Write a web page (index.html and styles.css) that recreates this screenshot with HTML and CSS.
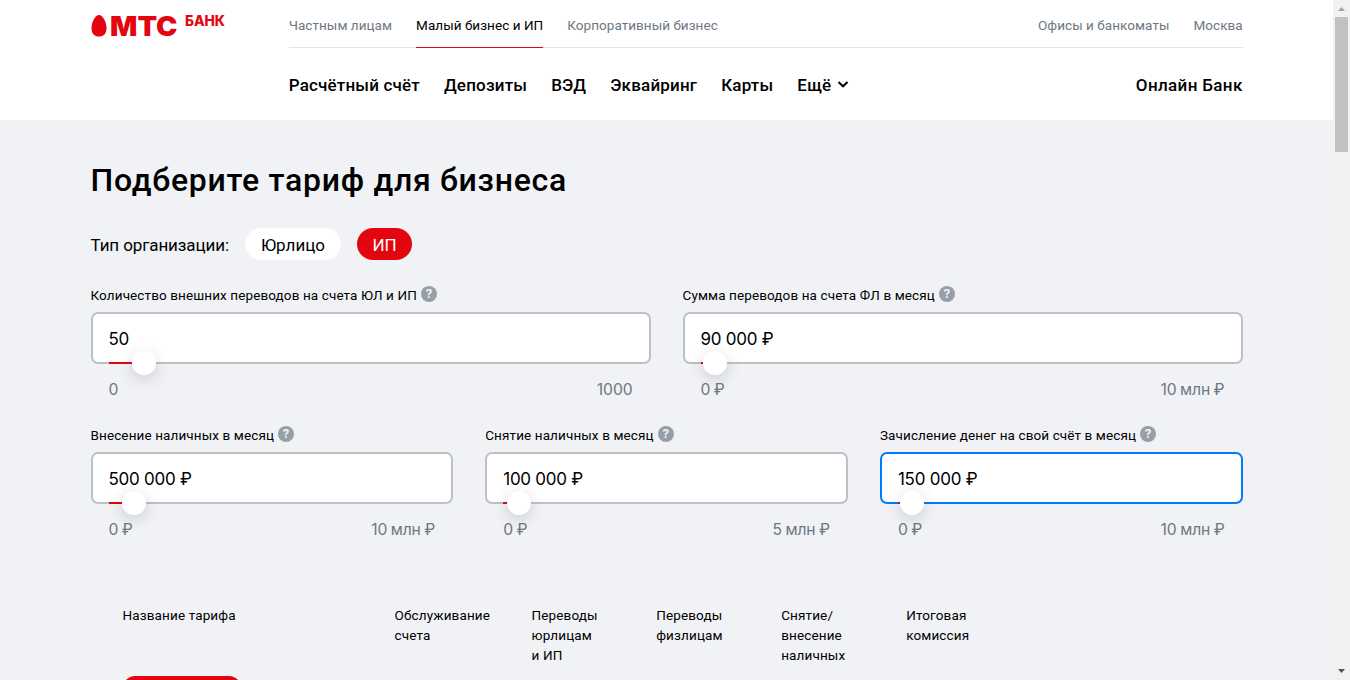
FILE: index.html
```html
<!DOCTYPE html>
<html lang="ru">
<head>
<meta charset="utf-8">
<title>МТС Банк</title>
<link rel="stylesheet" href="styles.css">
</head>
<body>
<div class="window">
<div class="page">
  <header class="header">
    <div class="container header-row">
      <svg class="logo" width="140" height="40" viewBox="0 -10 140 40">
        <path class="red" d="M8 0C12 0 15.500 7.400 15.500 13C15.500 18.600 12.600 21.600 8 21.600S.5 18.600 .5 13C.5 7.400 4 0 8 0Z"/>
        <text class="logo-main" x="19" y="20.500" textLength="67.500" lengthAdjust="spacingAndGlyphs">МТС</text>
        <text class="logo-sub" x="94" y="10.800" textLength="40" lengthAdjust="spacingAndGlyphs">БАНК</text>
      </svg>
      <div class="navs">
        <nav class="top-nav">
          <a>Частным лицам</a><a class="active">Малый бизнес и ИП</a><a>Корпоративный бизнес</a>
          <a class="push">Офисы и банкоматы</a><a>Москва</a>
        </nav>
        <nav class="main-nav">
          <a>Расчётный счёт</a><a>Депозиты</a><a>ВЭД</a><a>Эквайринг</a><a>Карты</a>
          <a class="more">Ещё<svg width="12" height="8" viewBox="0 0 12 8"><path d="M1.500 1L6 5.300L10.500 1" fill="none" stroke="#000" stroke-width="2"/></svg></a>
          <a class="push online">Онлайн Банк</a>
        </nav>
      </div>
    </div>
  </header>
  <main class="container">
    <h1>Подберите тариф для бизнеса</h1>
    <div class="org"><span>Тип организации:</span><button class="pill">Юрлицо</button><button class="pill selected">ИП</button></div>
    <div class="grid two">
      <div class="field"><div class="label"><span>Количество внешних переводов на счета ЮЛ и ИП</span><i class="help">?</i></div>
        <div class="input">50<b class="track" style="width:35px"><i class="knob"></i></b></div><div class="range"><span>0</span><span>1000</span></div></div>
      <div class="field"><div class="label"><span>Сумма переводов на счета ФЛ в месяц</span><i class="help">?</i></div>
        <div class="input">90 000 ₽<b class="track" style="width:14px"><i class="knob"></i></b></div><div class="range"><span>0 ₽</span><span>10 млн ₽</span></div></div>
    </div>
    <div class="grid three">
      <div class="field"><div class="label"><span>Внесение наличных в месяц</span><i class="help">?</i></div>
        <div class="input">500 000 ₽<b class="track" style="width:25px"><i class="knob"></i></b></div><div class="range"><span>0 ₽</span><span>10 млн ₽</span></div></div>
      <div class="field"><div class="label"><span>Снятие наличных в месяц</span><i class="help">?</i></div>
        <div class="input">100 000 ₽<b class="track" style="width:15.500px"><i class="knob"></i></b></div><div class="range"><span>0 ₽</span><span>5 млн ₽</span></div></div>
      <div class="field"><div class="label"><span>Зачисление денег на свой счёт в месяц</span><i class="help">?</i></div>
        <div class="input focus">150 000 ₽<b class="track" style="width:14px"><i class="knob"></i></b></div><div class="range"><span>0 ₽</span><span>10 млн ₽</span></div></div>
    </div>
    <div class="table-head">
      <span>Название тарифа</span><span>Обслуживание<br>счета</span><span>Переводы<br>юрлицам<br>и ИП</span><span>Переводы<br>физлицам</span><span>Снятие/<br>внесение<br>наличных</span><span>Итоговая<br>комиссия</span>
    </div>
    <div class="badge"></div>
  </main>
</div>
<div class="scrollbar">
  <svg width="17" height="17" viewBox="0 0 17 17"><path d="M5 11L8.500 7L12 11Z" fill="#a3a3a3"/></svg>
  <div class="thumb"></div>
  <svg class="down" width="17" height="17" viewBox="0 0 17 17"><path d="M5 6L8.500 10L12 6Z" fill="#505050"/></svg>
</div>
</div>
</body>
</html>
```
FILE: styles.css
```css
* { box-sizing: border-box; }
body { margin: 0; overflow: hidden; font: 13.5px/20px Roboto, "Liberation Sans", sans-serif; color: #000; }
.window { display: flex; height: 680px; overflow: hidden; }
.page { width: 1333px; height: 680px; overflow: hidden; background: #f1f2f6; }
.container { width: 1152.2px; margin-left: 90.5px; }
.header { height: 120px; background: #fff; }
.header-row { display: flex; justify-content: space-between; }
.logo { margin-top: 5px; }
.red, .logo text { fill: #e30611; }
.logo-main { font: 900 27px Inter, sans-serif; }
.logo-sub { font: 800 14px Inter, sans-serif; }
.navs { width: 954px; }
.top-nav { display: flex; gap: 24px; height: 48px; border-bottom: 1px solid #e2e3e7; color: #6e7782; letter-spacing: .05px; white-space: nowrap; }
.top-nav a { height: 48px; padding-top: 15px; }
.top-nav .active { color: #000; border-bottom: 1px solid #e30611; }
.push { margin-left: auto; }
.main-nav { display: flex; gap: 24px; margin-top: 25px; font-size: 17px; line-height: 24px; font-weight: 500; letter-spacing: .19px; white-space: nowrap; }
.online { letter-spacing: .36px; }
.more { display: flex; gap: 6px; }
.more svg { margin-top: 8px; }
h1 { margin: 0; padding-top: 40px; font-size: 32px; line-height: 40px; font-weight: 500; letter-spacing: .73px; }
.org { display: flex; height: 32px; margin-top: 28px; font-size: 17px; line-height: 34px; letter-spacing: -.1px; }
.pill { height: 32px; margin-left: 16px; padding: 2px 16px 0; border: 0; border-radius: 16px; background: #fff; color: #000; font: inherit; line-height: 30px; }
.pill.selected { padding: 2px 15.5px 0; background: #e30611; color: #fff; }
.grid { display: grid; height: 140px; }
.two { grid-template-columns: 560px 560px; gap: 32px; margin-top: 25px; }
.three { grid-template-columns: repeat(3, 1fr); gap: 32px; }
.label { display: flex; gap: 4px; height: 27px; white-space: nowrap; letter-spacing: .11px; }
.help { width: 16px; height: 16px; margin-top: 1px; border-radius: 50%; background: #969fa8; color: #f1f2f7; font: 700 13px/16px Roboto, sans-serif; letter-spacing: 0; text-align: center; }
.input { position: relative; height: 52px; padding: 1px 16px 0; border: 2px solid #bbc1c7; border-radius: 7px; background: #fff; font: 17px/48px Inter, sans-serif; letter-spacing: -.25px; }
.input.focus { border-color: #007cff; }
.track { position: absolute; left: 16px; bottom: -2px; height: 2px; background: #e30611; }
.knob { position: absolute; right: -12px; top: -11px; width: 24px; height: 24px; border-radius: 50%; background: #fff; box-shadow: 0 4px 16px rgba(0,0,0,.16); }
.range { display: flex; justify-content: space-between; padding: 14px 18px 0; color: #6e7782; font: 15.7px/24px Inter, sans-serif; letter-spacing: -.1px; word-spacing: -.8px; }
.table-head { display: grid; grid-template-columns: 272px 137px 124.7px 125px 125px 125px; height: 71px; margin: 40px 0 0 32px; letter-spacing: .13px; }
.badge { width: 118px; height: 24px; margin-left: 32px; border-radius: 12px; background: #e30611; }
.scrollbar { display: flex; flex-direction: column; width: 17px; height: 680px; background: #f1f1f1; }
.thumb { width: 13px; height: 135px; margin-left: 2px; background: #c1c1c1; }
.down { margin-top: auto; }
```
